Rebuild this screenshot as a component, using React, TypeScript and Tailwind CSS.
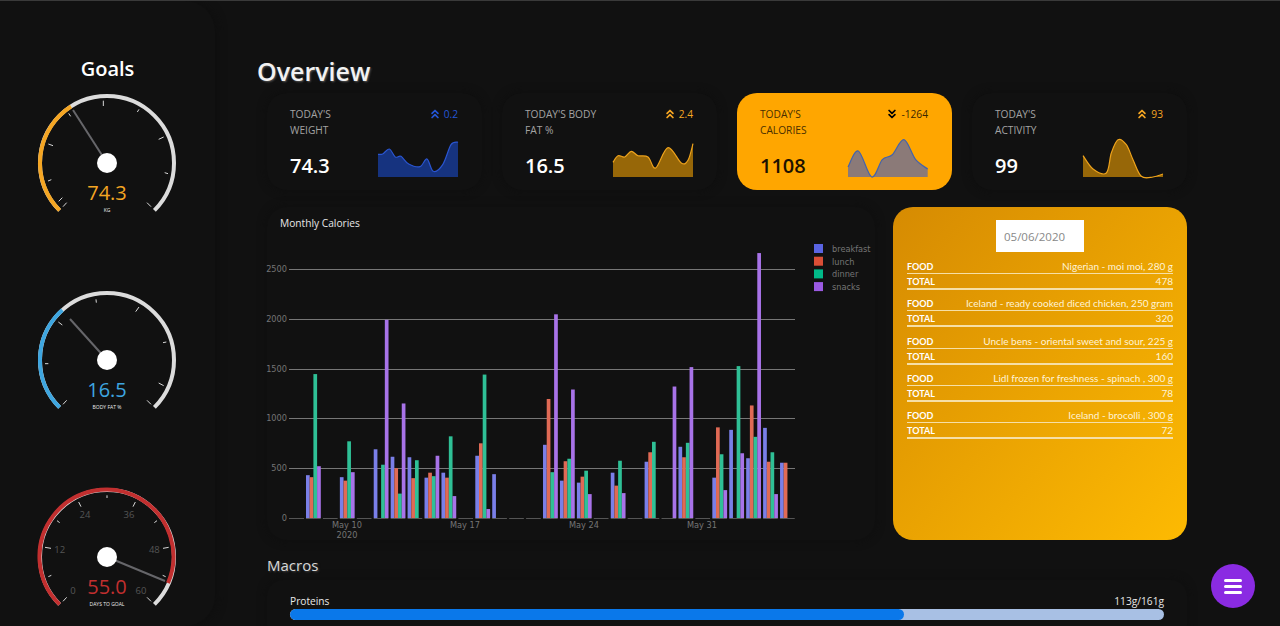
import React from 'react'
import { ChevronsDown, ChevronsUp } from 'lucide-react'

type Pt = [number, number]

// Catmull-Rom through the points, so the sparklines come out smooth
const smooth = (pts: Pt[]) => {
  let d = `M${pts[0][0]} ${pts[0][1]}`
  for (let i = 0; i < pts.length - 1; i++) {
    const p0 = pts[i - 1] || pts[i]
    const p1 = pts[i]
    const p2 = pts[i + 1]
    const p3 = pts[i + 2] || p2
    const c1x = p1[0] + (p2[0] - p0[0]) / 6
    const c1y = p1[1] + (p2[1] - p0[1]) / 6
    const c2x = p2[0] - (p3[0] - p1[0]) / 6
    const c2y = p2[1] - (p3[1] - p1[1]) / 6
    d += ` C${c1x.toFixed(1)} ${c1y.toFixed(1)} ${c2x.toFixed(1)} ${c2y.toFixed(1)} ${p2[0]} ${p2[1]}`
  }
  return d
}

// traced from the reference at 3x, x0/y0 is the corner of the 80x40 box
const traced = (x0: number, y0: number, pts: Pt[]): Pt[] =>
  pts.map(([x, y]) => [+((x - x0) / 3).toFixed(1), +((y - y0) / 3).toFixed(1)])

const cards = [
  {
    title: "TODAY'S",
    sub: 'WEIGHT',
    value: '74.3',
    delta: '0.2',
    up: true,
    accent: 'text-[#2456d6]',
    fill: '#16337f',
    line: '#2a55d0',
    pts: traced(386, 262, [[386, 314], [400, 313], [420, 298], [438, 322], [455, 320], [478, 343], [512, 351], [533, 328], [552, 365], [580, 345], [605, 285], [626, 277]]),
  },
  {
    title: "TODAY'S BODY",
    sub: 'FAT %',
    value: '16.5',
    delta: '2.4',
    up: true,
    accent: 'text-[#f5a623]',
    fill: '#976708',
    line: '#eea31c',
    pts: traced(1090, 262, [[1090, 338], [1105, 318], [1125, 322], [1145, 305], [1165, 318], [1195, 322], [1218, 355], [1255, 294], [1295, 340], [1315, 332], [1330, 282]]),
  },
  {
    title: "TODAY'S",
    sub: 'CALORIES',
    value: '1108',
    delta: '-1264',
    up: false,
    highlight: true,
    accent: 'text-[#3a2600]',
    fill: '#8b7a78',
    line: '#4263ad',
    pts: traced(357, 172, [[357, 262], [388, 214], [428, 292], [460, 240], [490, 225], [525, 180], [560, 240], [596, 268]]),
  },
  {
    title: "TODAY'S",
    sub: 'ACTIVITY',
    value: '99',
    delta: '93',
    up: true,
    accent: 'text-[#f5a623]',
    fill: '#976708',
    line: '#eea31c',
    pts: traced(1060, 172, [[1060, 228], [1090, 268], [1130, 280], [1145, 220], [1165, 180], [1190, 195], [1210, 240], [1235, 290], [1270, 292], [1300, 283]]),
  },
]

const foods = [
  { food: 'Nigerian - moi moi, 280 g', total: 478 },
  { food: 'Iceland - ready cooked diced chicken, 250 gram', total: 320 },
  { food: 'Uncle bens - oriental sweet and sour, 225 g', total: 160 },
  { food: 'Lidl frozen for freshness - spinach , 300 g', total: 78 },
  { food: 'Iceland - brocolli , 300 g', total: 72 },
]

// breakfast, lunch, dinner, snacks per day, starting at the first group
const days: number[][] = [
  [430, 410, 1445, 520],
  [0, 0, 0, 0],
  [410, 375, 770, 460],
  [0, 0, 0, 0],
  [690, 0, 535, 1990],
  [615, 500, 245, 1150],
  [610, 400, 580, 0],
  [405, 455, 420, 625],
  [455, 405, 820, 220],
  [0, 0, 0, 0],
  [625, 750, 1440, 90],
  [440, 0, 0, 0],
  [0, 0, 0, 0],
  [0, 0, 0, 0],
  [735, 1195, 460, 2045],
  [375, 570, 595, 1290],
  [355, 415, 475, 240],
  [0, 0, 0, 0],
  [455, 325, 575, 250],
  [0, 0, 0, 0],
  [565, 660, 765, 0],
  [0, 0, 0, 1320],
  [715, 610, 755, 1515],
  [0, 0, 0, 0],
  [405, 910, 640, 280],
  [885, 0, 1525, 650],
  [600, 1130, 815, 2660],
  [905, 565, 660, 240],
  [555, 555, 0, 0],
]

const barColors = ['#7a7fe8', '#e06a55', '#2fc096', '#a873e8']
const legend = [
  { name: 'breakfast', color: '#636efa' },
  { name: 'lunch', color: '#ef553b' },
  { name: 'dinner', color: '#00cc96' },
  { name: 'snacks', color: '#ab63fa' },
]

type GaugeProps = {
  value: string
  unit: string
  color: string
  end: Pt
  needle: Pt
  large: boolean
  ticks: number[][]
  centerY: number
  labels?: { text: string; x: number; y: number }[]
}

function Gauge({ value, unit, color, end, needle, large, ticks, centerY, labels }: GaugeProps) {
  const cx = 107
  const cy = 75
  const px = (x: number) => (x - 320) / 3 + cx
  const py = (y: number) => (y - centerY) / 3 + cy
  return (
    <svg width="215" height="150" className="block">
      <path d={`M${cx - 47.4} ${cy + 47.4} A67 67 0 1 1 ${cx + 47.4} ${cy + 47.4}`} fill="none" stroke="#dcdcdc" strokeWidth="4" />
      <path d={`M${cx - 47.4} ${cy + 47.4} A67 67 0 ${large ? 1 : 0} 1 ${cx + end[0]} ${cy + end[1]}`} fill="none" stroke={color} strokeWidth="4" />
      {ticks.map((t, i) => (
        <line key={i} x1={px(t[0])} y1={py(t[1])} x2={px(t[2])} y2={py(t[3])} stroke="#d8d8d8" strokeWidth="1" />
      ))}
      {labels?.map((l) => (
        <text key={l.text} x={px(l.x)} y={py(l.y) + 3.5} textAnchor="middle" fontSize="9.5" fill="#555">
          {l.text}
        </text>
      ))}
      <line x1={cx} y1={cy} x2={cx + needle[0]} y2={cy + needle[1]} stroke="#66666a" strokeWidth="2" />
      <circle cx={cx} cy={cy} r="10" fill="#fff" />
      <text x={cx} y={cy + 37} textAnchor="middle" fontSize="20" fill={color}>
        {value}
      </text>
      <text x={cx} y={cy + 49} textAnchor="middle" fontSize="5" fill="#eee">
        {unit}
      </text>
    </svg>
  )
}

function Spark({ pts, fill, line }: { pts: Pt[]; fill: string; line: string }) {
  const d = smooth(pts)
  const last = pts[pts.length - 1]
  return (
    <svg width="80" height="40" className="block overflow-visible">
      <path d={`${d} L${last[0]} 40 L${pts[0][0]} 40 Z`} fill={fill} />
      <path d={d} fill="none" stroke={line} strokeWidth="1.2" />
    </svg>
  )
}

function CaloriesChart() {
  // page coordinates minus the svg corner (267, 240)
  const ox = 267
  const oy = 240
  const zero = 518 - oy
  const scale = 249 / 2500
  return (
    <svg width="608" height="300" className="block overflow-visible" fontFamily="'DejaVu Sans', sans-serif">
      {[500, 1000, 1500, 2000, 2500].map((v) => {
        const y = Math.round(zero - v * scale) + 0.5
        return <line key={v} x1={289 - ox} x2={795 - ox} y1={y} y2={y} stroke="#777" strokeWidth="1" />
      })}
      {[0, 500, 1000, 1500, 2000, 2500].map((v) => (
        <text key={v} x={287 - ox} y={zero - v * scale + 3} textAnchor="end" fontSize="8.2" fill="#757575">
          {v}
        </text>
      ))}
      <line x1={289 - ox} x2={304 - ox} y1={zero + 0.5} y2={zero + 0.5} stroke="#555" />
      {days.map((vals, d) => {
        const x = 306 + d * 16.93 - ox
        return (
          <g key={d}>
            <line x1={x} x2={x + 14.7} y1={zero + 0.5} y2={zero + 0.5} stroke="#555" />
            {vals.map((v, i) =>
              v > 0 ? (
                <rect key={i} x={x + i * 3.7} y={zero - v * scale} width="3.7" height={v * scale} fill={barColors[i]} />
              ) : null,
            )}
          </g>
        )
      })}
      {[
        ['May 10', 347],
        ['May 17', 465],
        ['May 24', 584],
        ['May 31', 702],
      ].map(([label, x]) => (
        <text key={label} x={(x as number) - ox} y={527.5 - oy} textAnchor="middle" fontSize="8.2" fill="#757575">
          {label}
        </text>
      ))}
      <text x={347 - ox} y={538 - oy} textAnchor="middle" fontSize="8.2" fill="#757575">
        2020
      </text>
      {legend.map((l, i) => (
        <g key={l.name}>
          <rect x={814 - ox} y={244 + i * 12.7 - oy} width="9" height="9" fill={l.color} opacity="0.9" />
          <text x={832 - ox} y={252 + i * 12.7 - oy} fontSize="8.2" fill="#757575">
            {l.name}
          </text>
        </g>
      ))}
    </svg>
  )
}

export default function App() {
  return (
    <div className="h-[626px] overflow-hidden bg-[#111111] border-t border-[#3a3a3a] flex font-['Open_Sans',sans-serif] text-white">
      {/* Goals */}
      <aside className="w-[215px] shrink-0 h-full rounded-r-[30px] shadow-[2px_0_10px_#0e0e0e] flex flex-col">
        <h2 className="mt-[53px] text-center text-[20px] leading-[30px] font-semibold">Goals</h2>
        <div className="mt-[4px] flex flex-col gap-[47px]">
          <Gauge
            value="74.3"
            unit="KG"
            color="#f5a623"
            end={[-36, -56.5]}
            needle={[-34, -53]}
            large={false}
            centerY={490}
            ticks={[
              [188, 621, 199, 609],
              [175, 605, 186, 594],
              [143, 544, 153, 540],
              [144, 433, 158, 438],
              [205, 341, 211, 350],
              [309, 303, 309, 319],
              [411, 337, 416, 329],
              [475, 419, 490, 412],
              [493, 519, 503, 522],
              [440, 609, 452, 621],
            ]}
          />
          <Gauge
            value="16.5"
            unit="BODY FAT %"
            color="#3ea6e0"
            end={[-44.7, -50]}
            needle={[-37, -41]}
            large={false}
            centerY={120}
            ticks={[
              [188, 253, 199, 241],
              [134, 131, 144, 131],
              [174, 6, 186, 15],
              [287, -62, 288, -52],
              [406, -25, 416, -39],
              [488, 68, 498, 66],
              [475, 189, 490, 197],
              [440, 241, 452, 253],
            ]}
          />
          <Gauge
            value="55.0"
            unit="DAYS TO GOAL"
            color="#c22f2f"
            end={[61, 26]}
            needle={[58, 24]}
            large={true}
            centerY={712}
            labels={[
              { text: '0', x: 218, y: 813 },
              { text: '12', x: 178, y: 689 },
              { text: '24', x: 254, y: 584 },
              { text: '36', x: 386, y: 584 },
              { text: '48', x: 462, y: 689 },
              { text: '60', x: 422, y: 813 },
            ]}
            ticks={[
              [188, 845, 199, 833],
              [144, 771, 153, 767],
              [134, 683, 152, 686],
              [170, 603, 178, 609],
              [235, 547, 242, 561],
              [320, 527, 320, 535],
              [405, 547, 398, 561],
              [462, 609, 470, 603],
              [488, 686, 505, 683],
              [487, 767, 496, 771],
              [440, 833, 452, 845],
            ]}
          />
        </div>
      </aside>

      <main className="flex-1 min-w-0 pl-[42px]">
        <h1 className="mt-[52px] text-[25px] leading-[36px] font-semibold text-[#f2f2f2] [text-shadow:1px_1px_2px_#555]">Overview</h1>

        <div className="ml-[10px] w-[920px]">
          {/* stat cards */}
          <div className="mt-[4px] flex gap-[20px]">
            {cards.map((c) => (
              <div
                key={c.sub}
                className={
                  c.highlight
                    ? 'w-[215px] h-[97px] rounded-[20px] bg-[#ffa600] pl-[23px] pr-[24px] pt-[13px] text-[#4a3000]'
                    : 'w-[215px] h-[97px] rounded-[20px] bg-[#111111] shadow-[0_0_10px_#0e0e0e] pl-[23px] pr-[24px] pt-[13px]'
                }
              >
                <div className="flex justify-between text-[10.2px] leading-[16px]">
                  <div className={c.highlight ? '' : 'text-[#a3a3a3]'}>
                    <div>{c.title}</div>
                    <div>{c.sub}</div>
                  </div>
                  <div className={`flex items-center h-[16px] gap-[2px] ${c.accent}`}>
                    {c.up ? (
                      <ChevronsUp size={14} strokeWidth={3} />
                    ) : (
                      <ChevronsDown size={14} strokeWidth={3} className="text-black" />
                    )}
                    <span>{c.delta}</span>
                  </div>
                </div>
                <div className="mt-[-1px] flex justify-between items-end">
                  <span className={`text-[20px] leading-[22px] font-semibold ${c.highlight ? 'text-[#1c1200]' : 'text-white'}`}>{c.value}</span>
                  <Spark pts={c.pts} fill={c.fill} line={c.line} />
                </div>
              </div>
            ))}
          </div>

          <div className="mt-[17px] flex gap-[18px]">
            {/* chart */}
            <div className="w-[608px] h-[333px] rounded-[20px] shadow-[0_0_10px_#0e0e0e]">
              <div className="h-[33px] pl-[13px] pt-[8px] text-[10.2px] leading-[16px] text-[#e8e8e8]">Monthly Calories</div>
              <CaloriesChart />
            </div>

            {/* food list */}
            <div className="w-[294px] h-[333px] rounded-[20px] bg-gradient-to-br from-[#d68b02] to-[#fdba02] px-[14px] pt-[13px] text-[#fff3d6]">
              <input
                readOnly
                value="05/06/2020"
                className="block ml-[89px] w-[88px] h-[32px] bg-white px-[8px] text-[11.5px] text-[#888] outline-none"
              />
              <div className="mt-[8px] flex flex-col gap-[7.25px] font-['Lato',sans-serif] text-[10px] leading-[13px]">
                {foods.map((f) => (
                  <div key={f.food}>
                    <div className="flex justify-between border-b border-[#f6dfa6]">
                      <b className="font-bold text-[9px] text-white">FOOD</b>
                      <span>{f.food}</span>
                    </div>
                    <div className="flex justify-between pt-px border-b-2 border-[#f6dfa6]">
                      <b className="font-bold text-[9px] text-white">TOTAL</b>
                      <span>{f.total}</span>
                    </div>
                  </div>
                ))}
              </div>
            </div>
          </div>

          {/* macros */}
          <h3 className="mt-[14px] text-[15px] leading-[22px] font-medium text-[#d8d8d8] [text-shadow:1px_1px_2px_#444]">Macros</h3>
          <div className="mt-[4px] h-[60px] rounded-[16px] shadow-[0_0_10px_#0e0e0e] px-[23px] pt-[13px]">
            <div className="flex justify-between text-[10.2px] leading-[16px] text-[#e8e8e8]">
              <span>Proteins</span>
              <span>113g/161g</span>
            </div>
            <div className="h-[11px] rounded-full bg-[#a8c0e4] overflow-hidden">
              <div className="h-full w-[70.2%] rounded-full bg-[#0a78ea]" />
            </div>
          </div>
        </div>
      </main>

      <button className="fixed right-[25px] top-[564px] w-[44px] h-[44px] rounded-full bg-[#8a2be2] flex flex-col items-center justify-center gap-[3px]">
        <span className="w-[18px] h-[3px] rounded-sm bg-white" />
        <span className="w-[18px] h-[3px] rounded-sm bg-white" />
        <span className="w-[18px] h-[3px] rounded-sm bg-white" />
      </button>
    </div>
  )
}
